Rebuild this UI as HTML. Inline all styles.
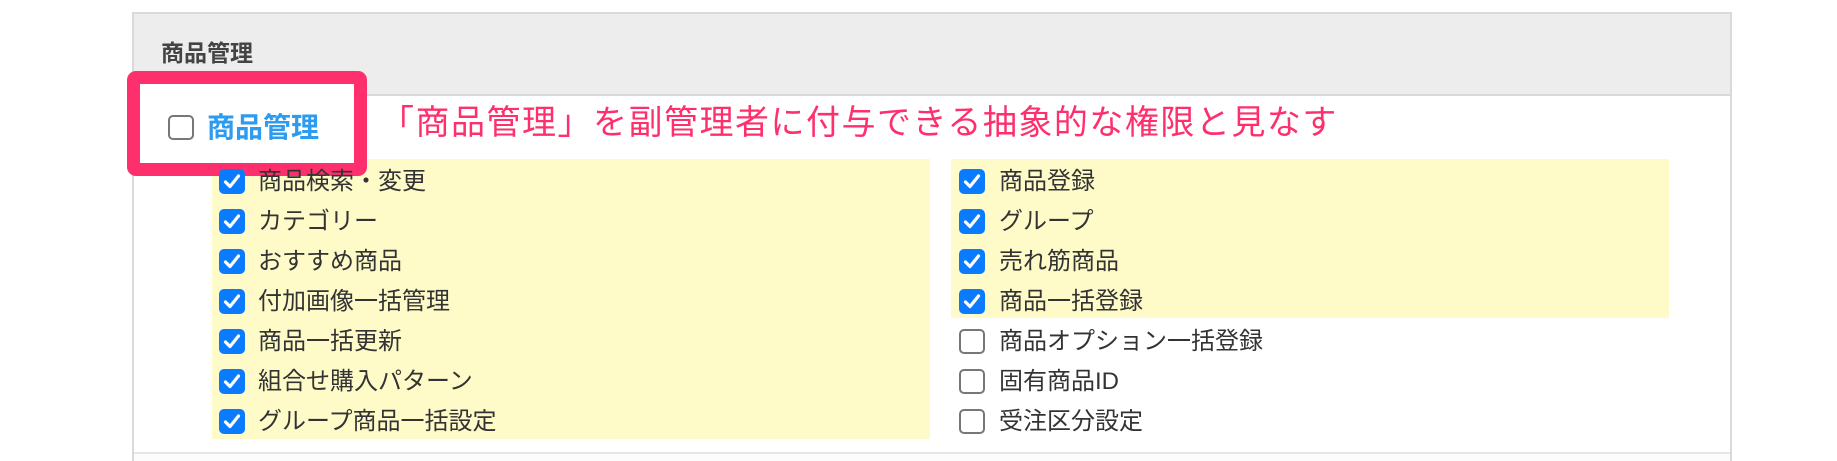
<!DOCTYPE html>
<html><head><meta charset="utf-8"><style>
html,body{margin:0;width:1837px;height:461px;overflow:hidden}
body{background:#fff;position:relative;font-family:"Liberation Sans","Noto Sans CJK JP",sans-serif;}
.a{position:absolute}
.box{left:132px;top:12px;width:1600px;height:449px;border:2px solid #d9d9d9;border-bottom:none;box-sizing:border-box}
.hdr{left:134px;top:14px;width:1596px;height:80px;background:#ededed;border-bottom:2px solid #d9d9d9}
.y{background:#fefbc9}
.cb{position:absolute;width:26px;height:25px;border-radius:5px;background:#0a7bff}
.cb svg{position:absolute;left:4px;top:4px}
.ub{position:absolute;width:22px;height:21px;border-radius:5px;border:2px solid #777;background:#fff}
.t{position:absolute;font-size:24px;color:#333;line-height:26px;white-space:nowrap}
</style></head><body>
<div class="a box"></div>
<div class="a hdr"></div>
<div class="a" style="left:161px;top:40px;font-size:23px;font-weight:bold;color:#444;line-height:26px">商品管理</div>
<div class="a" style="left:134px;top:452px;width:1596px;height:2px;background:#e6e6e6"></div>
<div class="a" style="left:134px;top:454px;width:1596px;height:7px;background:#fcfcfc"></div>
<div class="a y" style="left:212px;top:159px;width:718px;height:280px"></div>
<div class="a y" style="left:951px;top:159px;width:718px;height:159px"></div>

<div class="a" style="left:127px;top:71px;width:240px;height:105px;border:13px solid #fe2f6d;border-radius:9px;box-sizing:border-box;background:#fff"></div>
<div class="ub" style="left:168px;top:115px"></div>
<div class="a" style="left:207px;top:112px;font-size:28px;font-weight:bold;color:#2d9cf0;line-height:32px">商品管理</div>
<div class="a" style="left:380px;top:104px;font-size:34px;letter-spacing:1.5px;color:#fe2f6d;line-height:38px;white-space:nowrap">「商品管理」を副管理者に付与できる抽象的な権限と見なす</div>

<div id="rows"></div>
<script>
var L=["商品検索・変更","カテゴリー","おすすめ商品","付加画像一括管理","商品一括更新","組合せ購入パターン","グループ商品一括設定"];
var R=["商品登録","グループ","売れ筋商品","商品一括登録","商品オプション一括登録","固有商品ID","受注区分設定"];
var h="";
var chk='<svg width="18" height="17" viewBox="0 0 18 17"><path d="M2.5 9 L7 13.5 L15.5 3" fill="none" stroke="#fff" stroke-width="3.2" stroke-linecap="round" stroke-linejoin="round"/></svg>';
for(var i=0;i<7;i++){var c=182+40*i;
h+='<div class="cb" style="left:219px;top:'+(c-13)+'px">'+chk+'</div><div class="t" style="left:258px;top:'+(c-13)+'px">'+L[i]+'</div>';
if(i<4)h+='<div class="cb" style="left:959px;top:'+(c-13)+'px">'+chk+'</div>';else h+='<div class="ub" style="left:959px;top:'+(c-13)+'px"></div>';
h+='<div class="t" style="left:999px;top:'+(c-13)+'px">'+R[i]+'</div>';}
document.getElementById("rows").innerHTML=h;
</script>
</body></html>
